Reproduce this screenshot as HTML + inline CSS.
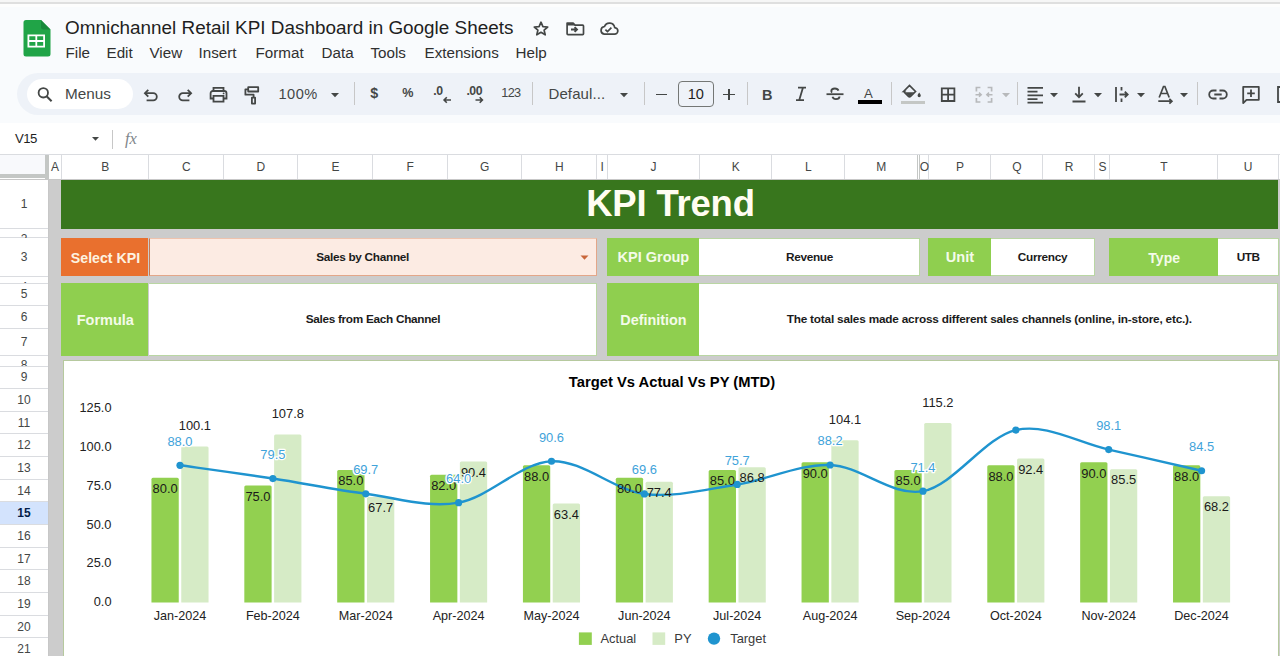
<!DOCTYPE html>
<html><head><meta charset="utf-8"><style>
html,body{margin:0;padding:0;}
body{width:1280px;height:656px;overflow:hidden;position:relative;background:#f9fbfd;font-family:"Liberation Sans", sans-serif;}
body>div,body>svg,div>div{position:absolute;}
.t{white-space:nowrap;}
svg{position:absolute;overflow:visible}
</style></head><body>
<div style="left:0.00px;top:0.00px;width:1280.00px;height:1.80px;background:#f6f6f6;"></div>
<div style="left:0.00px;top:1.80px;width:1280.00px;height:2.00px;background:#dfdfdf;"></div>
<div style="left:0.00px;top:3.80px;width:1280.00px;height:3.20px;background:#fdfdfd;"></div>
<svg style="left:22px;top:19px" width="30" height="38" viewBox="0 0 30 38">
<path d="M3.5 1h15.5l9.5 9.5v24.5a2.5 2.5 0 0 1-2.5 2.5h-22a2.5 2.5 0 0 1-2.5-2.5v-31.5a2.5 2.5 0 0 1 2.5-2.5z" fill="#20a447"/>
<path d="M19 1l9.5 9.5h-7a2.5 2.5 0 0 1-2.5-2.5z" fill="#178a3a"/>
<path d="M5.5 15.5h17.5v13h-17.5z M7.3 17.3v3.8h6.1v-3.8z M15.2 17.3v3.8h6v-3.8z M7.3 22.9v3.8h6.1v-3.8z M15.2 22.9v3.8h6v-3.8z" fill="#fff" fill-rule="evenodd"/>
</svg>
<div class="t" style="left:65.00px;top:18.99px;font-size:18.9px;line-height:18.9px;color:#1f1f1f;">Omnichannel Retail KPI Dashboard in Google Sheets</div>
<svg style="left:531px;top:19px" width="20" height="20" viewBox="0 0 20 20"><path d="M10 3.2l1.9 4.4 4.8.4-3.6 3.1 1.1 4.7-4.2-2.5-4.2 2.5 1.1-4.7-3.6-3.1 4.8-.4z" fill="none" stroke="#444746" stroke-width="1.7" stroke-linejoin="round"/></svg>
<svg style="left:564.3px;top:19px" width="22" height="20" viewBox="0 0 22 20"><path d="M3.1 4.1h6l1.9 2h7.6a.9.9 0 0 1 .9.9v7.7a.9.9 0 0 1-.9.9h-14.6a.9.9 0 0 1-.9-.9z" fill="none" stroke="#444746" stroke-width="1.7" stroke-linejoin="round"/><path d="M3 4h6l1.5 2.5h-7.5z" fill="#444746"/><path d="M7 10.5h5.5M10.6 8.1l2.4 2.4-2.4 2.4" fill="none" stroke="#444746" stroke-width="1.9"/></svg>
<svg style="left:597px;top:19px" width="24" height="20" viewBox="0 0 24 20"><path d="M7.2 15.2h10.2a3.3 3.3 0 0 0 .3-6.6 5.3 5.3 0 0 0-10.2-1.1 3.9 3.9 0 0 0-.3 7.7z" fill="none" stroke="#444746" stroke-width="1.7" stroke-linejoin="round"/><path d="M8.4 10.6l2.1 2 3.9-3.9" fill="none" stroke="#444746" stroke-width="1.7"/></svg>
<div class="t" style="left:65.50px;top:44.63px;font-size:15.2px;line-height:15.2px;color:#303030;">File</div>
<div class="t" style="left:106.50px;top:44.63px;font-size:15.2px;line-height:15.2px;color:#303030;">Edit</div>
<div class="t" style="left:149.50px;top:44.63px;font-size:15.2px;line-height:15.2px;color:#303030;">View</div>
<div class="t" style="left:198.50px;top:44.63px;font-size:15.2px;line-height:15.2px;color:#303030;">Insert</div>
<div class="t" style="left:255.50px;top:44.63px;font-size:15.2px;line-height:15.2px;color:#303030;">Format</div>
<div class="t" style="left:321.50px;top:44.63px;font-size:15.2px;line-height:15.2px;color:#303030;">Data</div>
<div class="t" style="left:370.50px;top:44.63px;font-size:15.2px;line-height:15.2px;color:#303030;">Tools</div>
<div class="t" style="left:424.50px;top:44.63px;font-size:15.2px;line-height:15.2px;color:#303030;">Extensions</div>
<div class="t" style="left:515.50px;top:44.63px;font-size:15.2px;line-height:15.2px;color:#303030;">Help</div>
<div style="left:17px;top:73px;width:1300px;height:41.5px;border-radius:21px;background:#eef2f8"></div>
<div style="left:27px;top:79px;width:106px;height:29.6px;border-radius:15px;background:#ffffff"></div>
<svg style="left:35px;top:85px" width="20" height="20" viewBox="0 0 20 20"><circle cx="8.3" cy="7.8" r="4.7" fill="none" stroke="#444746" stroke-width="1.8"/><path d="M11.6 11.2l5 5" stroke="#444746" stroke-width="2" /></svg>
<div class="t" style="left:65.00px;top:85.64px;font-size:15.3px;line-height:15.3px;color:#444746;">Menus</div>
<svg style="left:140px;top:82px" width="22" height="24" viewBox="0 0 22 24"><path d="M5 11.2h8.2a3.6 3.6 0 0 1 0 7.2h-6.6" fill="none" stroke="#444746" stroke-width="1.8"/><path d="M8.3 7.8l-3.4 3.4 3.4 3.4" fill="none" stroke="#444746" stroke-width="1.8"/></svg>
<svg style="left:174px;top:82px" width="22" height="24" viewBox="0 0 22 24"><path d="M17 11.2h-8.2a3.6 3.6 0 0 0 0 7.2h6.6" fill="none" stroke="#444746" stroke-width="1.8"/><path d="M13.7 7.8l3.4 3.4-3.4 3.4" fill="none" stroke="#444746" stroke-width="1.8"/></svg>
<svg style="left:207px;top:83px" width="24" height="24" viewBox="0 0 24 24"><path d="M6.5 8v-3.2h10v3.2" fill="none" stroke="#444746" stroke-width="1.8"/><path d="M6.2 15.5h-2.6v-5.2a2.3 2.3 0 0 1 2.3-2.3h11.3a2.3 2.3 0 0 1 2.3 2.3v5.2h-2.6" fill="none" stroke="#444746" stroke-width="1.8"/><path d="M6.5 12.8h10v5.9h-10z" fill="none" stroke="#444746" stroke-width="1.8"/><circle cx="16.6" cy="10.4" r="0.9" fill="#444746"/></svg>
<svg style="left:241px;top:82px" width="22" height="24" viewBox="0 0 22 24"><path d="M7.2 5.2h10v4.3h-10z" fill="none" stroke="#444746" stroke-width="1.8" stroke-linejoin="round"/><path d="M7 7.3h-2.6v5.4h8.2v2.5" fill="none" stroke="#444746" stroke-width="1.8" stroke-linejoin="round"/><path d="M10.9 15.6h3.2v6h-3.2z" fill="none" stroke="#444746" stroke-width="1.8" stroke-linejoin="round"/></svg>
<div class="t" style="left:278.50px;top:87.23px;font-size:14.6px;line-height:14.6px;color:#444746;letter-spacing:0.5px;">100%</div>
<svg style="left:330.0px;top:92.10000000000001px" width="10" height="6.2" viewBox="0 0 10 6.2"><path d="M1 1h8l-4.0 4.2z" fill="#444746"/></svg>
<div style="left:354.10px;top:82.00px;width:1.00px;height:23.00px;background:#c7c7c7;"></div>
<div class="t" style="left:370.20px;top:86.49px;font-size:14.3px;line-height:14.3px;color:#444746;font-weight:bold;">$</div>
<div class="t" style="left:402.30px;top:87.23px;font-size:12.6px;line-height:12.6px;color:#444746;font-weight:bold;">%</div>
<div class="t" style="left:433.20px;top:85.28px;font-size:12.3px;line-height:12.3px;color:#444746;font-weight:bold;letter-spacing:-0.3px;">.0</div>
<svg style="left:441px;top:96px" width="12" height="8" viewBox="0 0 12 8"><path d="M10 4h-7M5.8 1.3l-2.7 2.7 2.7 2.7" fill="none" stroke="#444746" stroke-width="1.6"/></svg>
<div class="t" style="left:466.40px;top:85.28px;font-size:12.3px;line-height:12.3px;color:#444746;font-weight:bold;letter-spacing:-0.5px;">.00</div>
<svg style="left:474px;top:96px" width="12" height="8" viewBox="0 0 12 8"><path d="M1.5 4h7M5.7 1.3l2.7 2.7-2.7 2.7" fill="none" stroke="#444746" stroke-width="1.6"/></svg>
<div class="t" style="left:501.20px;top:87.14px;font-size:12.7px;line-height:12.7px;color:#444746;letter-spacing:-0.6px;">123</div>
<div style="left:531.50px;top:82.00px;width:1.00px;height:23.00px;background:#c7c7c7;"></div>
<div class="t" style="left:548.50px;top:85.89px;font-size:15px;line-height:15px;color:#444746;letter-spacing:0.1px;">Defaul...</div>
<svg style="left:618.5px;top:92.4px" width="10" height="6.2" viewBox="0 0 10 6.2"><path d="M1 1h8l-4.0 4.2z" fill="#444746"/></svg>
<div style="left:644.00px;top:82.00px;width:1.00px;height:23.00px;background:#c7c7c7;"></div>
<div style="left:656.00px;top:93.50px;width:11.00px;height:1.80px;background:#444746;"></div>
<div style="left:678px;top:81px;width:33.5px;height:23.5px;border:1px solid #747775;border-radius:4px;"></div>
<div class="t" style="left:295.80px;width:800px;text-align:center;top:87.13px;font-size:14.6px;line-height:14.6px;color:#1f1f1f;">10</div>
<div style="left:723.00px;top:93.50px;width:11.50px;height:1.80px;background:#444746;"></div>
<div style="left:727.90px;top:88.60px;width:1.70px;height:11.60px;background:#444746;"></div>
<div style="left:747.00px;top:82.00px;width:1.00px;height:23.00px;background:#c7c7c7;"></div>
<div class="t" style="left:762.00px;top:87.52px;font-size:14.5px;line-height:14.5px;color:#444746;font-weight:bold;">B</div>
<svg style="left:793px;top:85px" width="16" height="18" viewBox="0 0 16 18"><path d="M5 2.6h8M3 15.2h8M10 2.6l-3.8 12.6" fill="none" stroke="#444746" stroke-width="1.8"/></svg>
<svg style="left:824px;top:84px" width="22" height="20" viewBox="0 0 22 20"><path d="M2.5 10.2h17" fill="none" stroke="#444746" stroke-width="1.8"/><path d="M14.5 6.6c-.5-1.3-1.9-2.1-3.6-2.1-2 0-3.6 1-3.6 2.6 0 .6.3 1.1.7 1.5M8.5 12.8c.4 1.4 1.6 2.3 3.4 2.3 2 0 3.6-1 3.6-2.6" fill="none" stroke="#444746" stroke-width="1.8"/></svg>
<div class="t" style="left:864.00px;top:86.62px;font-size:13.2px;line-height:13.2px;color:#444746;">A</div>
<div style="left:857.50px;top:100.00px;width:24.50px;height:3.80px;background:#000;"></div>
<div style="left:890.50px;top:82.00px;width:1.00px;height:23.00px;background:#c7c7c7;"></div>
<svg style="left:899px;top:83px" width="28" height="22" viewBox="0 0 28 22"><path d="M4.5 8.5l6-6 6 6-5 5a1.4 1.4 0 0 1-2 0l-4-4a.7.7 0 0 1 0-1z" fill="none" stroke="#444746" stroke-width="1.7"/><path d="M5.8 9.3h9.4l-4.2 4.2a.8.8 0 0 1-1.1 0z" fill="#444746"/><path d="M20.2 9.5c1 1.5 1.6 2.4 1.6 3.1a1.6 1.6 0 0 1-3.2 0c0-.7.6-1.6 1.6-3.1z" fill="#444746"/></svg>
<div style="left:900.50px;top:100.60px;width:24.50px;height:3.00px;background:#c4c7c5;"></div>
<svg style="left:938px;top:84px" width="20" height="20" viewBox="0 0 20 20"><path d="M3.8 4.4h12.6v12.6h-12.6zM10.1 4.4v12.6M3.8 10.7h12.6" fill="none" stroke="#444746" stroke-width="1.8"/></svg>
<svg style="left:972px;top:84px" width="24" height="20" viewBox="0 0 24 20"><path d="M4.4 7.5v-4h4M15.6 3.5h4v4M4.4 14v4h4M15.6 18h4v-4" fill="none" stroke="#b7b9bb" stroke-width="1.7"/><path d="M3.5 10.7h5.5M7 8.6l2.2 2.1-2.2 2.1M20.5 10.7h-5.5M17 8.6l-2.2 2.1 2.2 2.1" fill="none" stroke="#b7b9bb" stroke-width="1.5"/></svg>
<svg style="left:1000.7px;top:91.9px" width="10" height="6.2" viewBox="0 0 10 6.2"><path d="M1 1h8l-4.0 4.2z" fill="#b7b9bb"/></svg>
<div style="left:1017.00px;top:82.00px;width:1.00px;height:23.00px;background:#c7c7c7;"></div>
<svg style="left:1025px;top:84px" width="20" height="20" viewBox="0 0 20 20"><path d="M2.5 3.8h15.5M2.5 7.6h10M2.5 11.4h15.5M2.5 15.2h10M2.5 18.6h15.5" fill="none" stroke="#444746" stroke-width="1.7"/></svg>
<svg style="left:1049.3px;top:91.9px" width="10" height="6.2" viewBox="0 0 10 6.2"><path d="M1 1h8l-4.0 4.2z" fill="#444746"/></svg>
<svg style="left:1070px;top:84px" width="18" height="20" viewBox="0 0 18 20"><path d="M9 2.8v10.3M5.2 9.4l3.8 3.8 3.8-3.8M2.5 17.5h13" fill="none" stroke="#444746" stroke-width="1.8"/></svg>
<svg style="left:1092.6px;top:91.9px" width="10" height="6.2" viewBox="0 0 10 6.2"><path d="M1 1h8l-4.0 4.2z" fill="#444746"/></svg>
<svg style="left:1113px;top:84px" width="18" height="20" viewBox="0 0 18 20"><path d="M3 3v15" fill="none" stroke="#444746" stroke-width="1.8"/><path d="M6.5 10.5h8.2M11.8 7.6l2.9 2.9-2.9 2.9" fill="none" stroke="#444746" stroke-width="1.8"/><path d="M8.5 3v3.5M8.5 14.5v3.5" fill="none" stroke="#444746" stroke-width="1.8"/></svg>
<svg style="left:1136.0px;top:91.9px" width="10" height="6.2" viewBox="0 0 10 6.2"><path d="M1 1h8l-4.0 4.2z" fill="#444746"/></svg>
<svg style="left:1156px;top:84px" width="20" height="20" viewBox="0 0 20 20"><path d="M3.2 13.5l4.3-11h1.4l4.3 11M5 9.5h6.3" fill="none" stroke="#444746" stroke-width="1.7"/><path d="M2.3 17.2h13.2M13.4 14.8l2.5 2.4-2.5 2.4" fill="none" stroke="#444746" stroke-width="1.7"/></svg>
<svg style="left:1179.0px;top:91.9px" width="10" height="6.2" viewBox="0 0 10 6.2"><path d="M1 1h8l-4.0 4.2z" fill="#444746"/></svg>
<div style="left:1197.00px;top:82.00px;width:1.00px;height:23.00px;background:#c7c7c7;"></div>
<svg style="left:1207px;top:84px" width="22" height="20" viewBox="0 0 22 20"><path d="M9.5 6.5h-3.3a4 4 0 0 0 0 8h3.3M12.5 6.5h3.3a4 4 0 0 1 0 8h-3.3M7.3 10.5h7.4" fill="none" stroke="#444746" stroke-width="1.8"/></svg>
<svg style="left:1240px;top:84px" width="22" height="22" viewBox="0 0 22 22"><path d="M3.2 2.8h15.6v13h-12.3l-3.3 3.3z" fill="none" stroke="#444746" stroke-width="1.8" stroke-linejoin="round"/><path d="M11 5.6v7.5M7.2 9.4h7.6" fill="none" stroke="#444746" stroke-width="1.8"/></svg>
<svg style="left:1274px;top:84px" width="8" height="20" viewBox="0 0 8 20"><path d="M4 3h6v15h-6z" fill="none" stroke="#444746" stroke-width="1.8"/></svg>
<div style="left:0.00px;top:122.50px;width:1280.00px;height:31.00px;background:#ffffff;"></div>
<div class="t" style="left:15.00px;top:131.82px;font-size:13.2px;line-height:13.2px;color:#1f1f1f;letter-spacing:-0.6px;">V15</div>
<svg style="left:91.0px;top:136.1px" width="9" height="5.8" viewBox="0 0 9 5.8"><path d="M1 1h7l-3.5 3.8z" fill="#444746"/></svg>
<div style="left:112.00px;top:130.00px;width:1.00px;height:18.50px;background:#c7c7c7;"></div>
<div class="t" style="left:125.00px;top:131.02px;font-size:16.5px;line-height:16.5px;color:#80868b;font-family:'Liberation Serif',serif;"><i>fx</i></div>
<div style="left:0.00px;top:153.50px;width:1280.00px;height:1.20px;background:#dadce0;"></div>
<div style="left:0.00px;top:154.70px;width:1280.00px;height:24.70px;background:#ffffff;"></div>
<div style="left:0.00px;top:179.40px;width:1280.00px;height:0.80px;background:#c7c7c7;"></div>
<div style="left:0.00px;top:154.70px;width:44.50px;height:19.80px;background:#f8f9fc;"></div>
<div style="left:44.50px;top:154.70px;width:4.00px;height:24.70px;background:#c4c7c5;"></div>
<div style="left:0.00px;top:174.40px;width:48.50px;height:3.80px;background:#c4c7c5;"></div>
<div style="left:60.80px;top:154.70px;width:1.00px;height:24.70px;background:#dadce0;"></div>
<div class="t" style="left:-344.95px;width:800px;text-align:center;top:160.84px;font-size:12px;line-height:12px;color:#444746;">A</div>
<div style="left:148.00px;top:154.70px;width:1.00px;height:24.70px;background:#dadce0;"></div>
<div class="t" style="left:-294.70px;width:800px;text-align:center;top:160.84px;font-size:12px;line-height:12px;color:#444746;">B</div>
<div style="left:222.80px;top:154.70px;width:1.00px;height:24.70px;background:#dadce0;"></div>
<div class="t" style="left:-213.70px;width:800px;text-align:center;top:160.84px;font-size:12px;line-height:12px;color:#444746;">C</div>
<div style="left:297.20px;top:154.70px;width:1.00px;height:24.70px;background:#dadce0;"></div>
<div class="t" style="left:-139.10px;width:800px;text-align:center;top:160.84px;font-size:12px;line-height:12px;color:#444746;">D</div>
<div style="left:372.00px;top:154.70px;width:1.00px;height:24.70px;background:#dadce0;"></div>
<div class="t" style="left:-64.50px;width:800px;text-align:center;top:160.84px;font-size:12px;line-height:12px;color:#444746;">E</div>
<div style="left:446.50px;top:154.70px;width:1.00px;height:24.70px;background:#dadce0;"></div>
<div class="t" style="left:10.15px;width:800px;text-align:center;top:160.84px;font-size:12px;line-height:12px;color:#444746;">F</div>
<div style="left:521.00px;top:154.70px;width:1.00px;height:24.70px;background:#dadce0;"></div>
<div class="t" style="left:84.65px;width:800px;text-align:center;top:160.84px;font-size:12px;line-height:12px;color:#444746;">G</div>
<div style="left:595.90px;top:154.70px;width:1.00px;height:24.70px;background:#dadce0;"></div>
<div class="t" style="left:159.35px;width:800px;text-align:center;top:160.84px;font-size:12px;line-height:12px;color:#444746;">H</div>
<div style="left:606.80px;top:154.70px;width:1.00px;height:24.70px;background:#dadce0;"></div>
<div class="t" style="left:202.25px;width:800px;text-align:center;top:160.84px;font-size:12px;line-height:12px;color:#444746;">I</div>
<div style="left:698.50px;top:154.70px;width:1.00px;height:24.70px;background:#dadce0;"></div>
<div class="t" style="left:253.55px;width:800px;text-align:center;top:160.84px;font-size:12px;line-height:12px;color:#444746;">J</div>
<div style="left:771.00px;top:154.70px;width:1.00px;height:24.70px;background:#dadce0;"></div>
<div class="t" style="left:335.65px;width:800px;text-align:center;top:160.84px;font-size:12px;line-height:12px;color:#444746;">K</div>
<div style="left:844.00px;top:154.70px;width:1.00px;height:24.70px;background:#dadce0;"></div>
<div class="t" style="left:408.40px;width:800px;text-align:center;top:160.84px;font-size:12px;line-height:12px;color:#444746;">L</div>
<div style="left:916.50px;top:154.70px;width:1.00px;height:24.70px;background:#dadce0;"></div>
<div class="t" style="left:481.15px;width:800px;text-align:center;top:160.84px;font-size:12px;line-height:12px;color:#444746;">M</div>
<div style="left:927.90px;top:154.70px;width:1.00px;height:24.70px;background:#dadce0;"></div>
<div class="t" style="left:524.50px;width:800px;text-align:center;top:160.84px;font-size:12px;line-height:12px;color:#444746;">O</div>
<div style="left:990.10px;top:154.70px;width:1.00px;height:24.70px;background:#dadce0;"></div>
<div class="t" style="left:559.90px;width:800px;text-align:center;top:160.84px;font-size:12px;line-height:12px;color:#444746;">P</div>
<div style="left:1042.10px;top:154.70px;width:1.00px;height:24.70px;background:#dadce0;"></div>
<div class="t" style="left:617.00px;width:800px;text-align:center;top:160.84px;font-size:12px;line-height:12px;color:#444746;">Q</div>
<div style="left:1094.20px;top:154.70px;width:1.00px;height:24.70px;background:#dadce0;"></div>
<div class="t" style="left:669.05px;width:800px;text-align:center;top:160.84px;font-size:12px;line-height:12px;color:#444746;">R</div>
<div style="left:1109.20px;top:154.70px;width:1.00px;height:24.70px;background:#dadce0;"></div>
<div class="t" style="left:702.60px;width:800px;text-align:center;top:160.84px;font-size:12px;line-height:12px;color:#444746;">S</div>
<div style="left:1217.00px;top:154.70px;width:1.00px;height:24.70px;background:#dadce0;"></div>
<div class="t" style="left:764.00px;width:800px;text-align:center;top:160.84px;font-size:12px;line-height:12px;color:#444746;">T</div>
<div style="left:1277.50px;top:154.70px;width:1.00px;height:24.70px;background:#dadce0;"></div>
<div class="t" style="left:848.15px;width:800px;text-align:center;top:160.84px;font-size:12px;line-height:12px;color:#444746;">U</div>
<div style="left:1399.50px;top:154.70px;width:1.00px;height:24.70px;background:#dadce0;"></div>
<div style="left:916.50px;top:154.70px;width:1.00px;height:24.70px;background:#c4c7c5;"></div>
<div style="left:919.30px;top:154.70px;width:1.00px;height:24.70px;background:#c4c7c5;"></div>
<div style="left:48.00px;top:180.00px;width:1232.00px;height:476.00px;background:#cccccc;"></div>
<div style="left:0.00px;top:180.00px;width:48.00px;height:476.00px;background:#ffffff;"></div>
<div style="left:0;top:180px;width:48px;height:476px;overflow:hidden">
<div style="left:0.00px;top:48.30px;width:48.00px;height:1.00px;background:#dadce0;"></div>
<div style="left:0;top:-0.60px;width:48px;height:49.40px;overflow:hidden">
<div class="t" style="left:-376.00px;width:800px;text-align:center;top:18.84px;font-size:12px;line-height:12px;color:#444746;">1</div>
</div>
<div style="left:0.00px;top:57.30px;width:48.00px;height:1.00px;background:#dadce0;"></div>
<div style="left:0;top:48.80px;width:48px;height:9.00px;overflow:hidden">
<div class="t" style="left:-376.00px;width:800px;text-align:center;top:4.14px;font-size:12px;line-height:12px;color:#444746;">2</div>
</div>
<div style="left:0.00px;top:96.10px;width:48.00px;height:1.00px;background:#dadce0;"></div>
<div style="left:0;top:57.80px;width:48px;height:38.80px;overflow:hidden">
<div class="t" style="left:-376.00px;width:800px;text-align:center;top:13.54px;font-size:12px;line-height:12px;color:#444746;">3</div>
</div>
<div style="left:0.00px;top:102.50px;width:48.00px;height:1.00px;background:#dadce0;"></div>
<div style="left:0;top:96.60px;width:48px;height:6.40px;overflow:hidden">
<div class="t" style="left:-376.00px;width:800px;text-align:center;top:4.14px;font-size:12px;line-height:12px;color:#444746;">4</div>
</div>
<div style="left:0.00px;top:125.10px;width:48.00px;height:1.00px;background:#dadce0;"></div>
<div style="left:0;top:103.00px;width:48px;height:22.60px;overflow:hidden">
<div class="t" style="left:-376.00px;width:800px;text-align:center;top:5.44px;font-size:12px;line-height:12px;color:#444746;">5</div>
</div>
<div style="left:0.00px;top:148.00px;width:48.00px;height:1.00px;background:#dadce0;"></div>
<div style="left:0;top:125.60px;width:48px;height:22.90px;overflow:hidden">
<div class="t" style="left:-376.00px;width:800px;text-align:center;top:5.59px;font-size:12px;line-height:12px;color:#444746;">6</div>
</div>
<div style="left:0.00px;top:174.80px;width:48.00px;height:1.00px;background:#dadce0;"></div>
<div style="left:0;top:148.50px;width:48px;height:26.80px;overflow:hidden">
<div class="t" style="left:-376.00px;width:800px;text-align:center;top:7.54px;font-size:12px;line-height:12px;color:#444746;">7</div>
</div>
<div style="left:0.00px;top:185.50px;width:48.00px;height:1.00px;background:#dadce0;"></div>
<div style="left:0;top:175.30px;width:48px;height:10.70px;overflow:hidden">
<div class="t" style="left:-376.00px;width:800px;text-align:center;top:4.14px;font-size:12px;line-height:12px;color:#444746;">8</div>
</div>
<div style="left:0.00px;top:208.15px;width:48.00px;height:1.00px;background:#dadce0;"></div>
<div style="left:0;top:186.00px;width:48px;height:22.65px;overflow:hidden">
<div class="t" style="left:-376.00px;width:800px;text-align:center;top:5.46px;font-size:12px;line-height:12px;color:#444746;">9</div>
</div>
<div style="left:0.00px;top:230.80px;width:48.00px;height:1.00px;background:#dadce0;"></div>
<div style="left:0;top:208.65px;width:48px;height:22.65px;overflow:hidden">
<div class="t" style="left:-376.00px;width:800px;text-align:center;top:5.46px;font-size:12px;line-height:12px;color:#444746;">10</div>
</div>
<div style="left:0.00px;top:253.45px;width:48.00px;height:1.00px;background:#dadce0;"></div>
<div style="left:0;top:231.30px;width:48px;height:22.65px;overflow:hidden">
<div class="t" style="left:-376.00px;width:800px;text-align:center;top:5.46px;font-size:12px;line-height:12px;color:#444746;">11</div>
</div>
<div style="left:0.00px;top:276.10px;width:48.00px;height:1.00px;background:#dadce0;"></div>
<div style="left:0;top:253.95px;width:48px;height:22.65px;overflow:hidden">
<div class="t" style="left:-376.00px;width:800px;text-align:center;top:5.46px;font-size:12px;line-height:12px;color:#444746;">12</div>
</div>
<div style="left:0.00px;top:298.75px;width:48.00px;height:1.00px;background:#dadce0;"></div>
<div style="left:0;top:276.60px;width:48px;height:22.65px;overflow:hidden">
<div class="t" style="left:-376.00px;width:800px;text-align:center;top:5.46px;font-size:12px;line-height:12px;color:#444746;">13</div>
</div>
<div style="left:0.00px;top:321.40px;width:48.00px;height:1.00px;background:#dadce0;"></div>
<div style="left:0;top:299.25px;width:48px;height:22.65px;overflow:hidden">
<div class="t" style="left:-376.00px;width:800px;text-align:center;top:5.46px;font-size:12px;line-height:12px;color:#444746;">14</div>
</div>
<div style="left:0.00px;top:321.90px;width:48.00px;height:22.65px;background:#d3e3fd;"></div>
<div style="left:0.00px;top:344.05px;width:48.00px;height:1.00px;background:#dadce0;"></div>
<div style="left:0;top:321.90px;width:48px;height:22.65px;overflow:hidden">
<div class="t" style="left:-376.00px;width:800px;text-align:center;top:5.46px;font-size:12px;line-height:12px;color:#041e49;font-weight:bold;">15</div>
</div>
<div style="left:0.00px;top:366.70px;width:48.00px;height:1.00px;background:#dadce0;"></div>
<div style="left:0;top:344.55px;width:48px;height:22.65px;overflow:hidden">
<div class="t" style="left:-376.00px;width:800px;text-align:center;top:5.46px;font-size:12px;line-height:12px;color:#444746;">16</div>
</div>
<div style="left:0.00px;top:389.35px;width:48.00px;height:1.00px;background:#dadce0;"></div>
<div style="left:0;top:367.20px;width:48px;height:22.65px;overflow:hidden">
<div class="t" style="left:-376.00px;width:800px;text-align:center;top:5.46px;font-size:12px;line-height:12px;color:#444746;">17</div>
</div>
<div style="left:0.00px;top:412.00px;width:48.00px;height:1.00px;background:#dadce0;"></div>
<div style="left:0;top:389.85px;width:48px;height:22.65px;overflow:hidden">
<div class="t" style="left:-376.00px;width:800px;text-align:center;top:5.46px;font-size:12px;line-height:12px;color:#444746;">18</div>
</div>
<div style="left:0.00px;top:434.65px;width:48.00px;height:1.00px;background:#dadce0;"></div>
<div style="left:0;top:412.50px;width:48px;height:22.65px;overflow:hidden">
<div class="t" style="left:-376.00px;width:800px;text-align:center;top:5.46px;font-size:12px;line-height:12px;color:#444746;">19</div>
</div>
<div style="left:0.00px;top:457.30px;width:48.00px;height:1.00px;background:#dadce0;"></div>
<div style="left:0;top:435.15px;width:48px;height:22.65px;overflow:hidden">
<div class="t" style="left:-376.00px;width:800px;text-align:center;top:5.46px;font-size:12px;line-height:12px;color:#444746;">20</div>
</div>
<div style="left:0.00px;top:479.95px;width:48.00px;height:1.00px;background:#dadce0;"></div>
<div style="left:0;top:457.80px;width:48px;height:22.65px;overflow:hidden">
<div class="t" style="left:-376.00px;width:800px;text-align:center;top:5.46px;font-size:12px;line-height:12px;color:#444746;">21</div>
</div>
<div style="left:0.00px;top:502.60px;width:48.00px;height:1.00px;background:#dadce0;"></div>
<div style="left:0;top:480.45px;width:48px;height:22.65px;overflow:hidden">
<div class="t" style="left:-376.00px;width:800px;text-align:center;top:5.46px;font-size:12px;line-height:12px;color:#444746;">22</div>
</div>
</div>
<div style="left:47.50px;top:180.00px;width:1.00px;height:476.00px;background:#c7c7c7;"></div>
<div style="left:61.30px;top:180.00px;width:1216.70px;height:48.60px;background:#38761d;"></div>
<div class="t" style="left:270.50px;width:800px;text-align:center;top:185.98px;font-size:36.5px;line-height:36.5px;color:#fffdf2;font-weight:bold;letter-spacing:-0.2px;">KPI Trend</div>
<div style="left:61.30px;top:237.60px;width:87.20px;height:38.80px;background:#e9702e;"></div>
<div style="left:148.50px;top:237.60px;width:448.10px;height:38.80px;background:#fcebe3;box-sizing:border-box;border:1px solid #e3a689;border-top-color:#eec3ae;border-left-color:#c9784f;"></div>
<div class="t" style="left:-294.50px;width:800px;text-align:center;top:250.77px;font-size:14.2px;line-height:14.2px;color:#fdf3e0;font-weight:bold;">Select KPI</div>
<div class="t" style="left:-37.40px;width:800px;text-align:center;top:251.51px;font-size:11.8px;line-height:11.8px;color:#1b1b1b;font-weight:bold;letter-spacing:-0.3px;">Sales by Channel</div>
<svg style="left:579px;top:253.5px" width="11" height="7" viewBox="0 0 11 7"><path d="M1.5 1.5h8l-4 4.2z" fill="#c8663a"/></svg>
<div style="left:606.80px;top:237.60px;width:92.20px;height:38.80px;background:#8fcf4f;"></div>
<div style="left:699.00px;top:237.60px;width:220.60px;height:38.80px;background:#ffffff;box-sizing:border-box;border:1px solid #b9d6a3;border-left:none;"></div>
<div class="t" style="left:253.40px;width:800px;text-align:center;top:250.42px;font-size:14.5px;line-height:14.5px;color:#f4fbe9;font-weight:bold;">KPI Group</div>
<div class="t" style="left:409.50px;width:800px;text-align:center;top:251.51px;font-size:11.8px;line-height:11.8px;color:#1b1b1b;font-weight:bold;letter-spacing:-0.3px;">Revenue</div>
<div style="left:927.90px;top:237.60px;width:63.10px;height:38.80px;background:#8fcf4f;"></div>
<div style="left:991.00px;top:237.60px;width:103.50px;height:38.80px;background:#ffffff;box-sizing:border-box;border:1px solid #b9d6a3;border-left:none;"></div>
<div class="t" style="left:560.00px;width:800px;text-align:center;top:250.33px;font-size:14.6px;line-height:14.6px;color:#f4fbe9;font-weight:bold;">Unit</div>
<div class="t" style="left:642.50px;width:800px;text-align:center;top:251.51px;font-size:11.8px;line-height:11.8px;color:#1b1b1b;font-weight:bold;letter-spacing:-0.3px;">Currency</div>
<div style="left:1109.00px;top:237.60px;width:108.50px;height:38.80px;background:#8fcf4f;"></div>
<div style="left:1217.50px;top:237.60px;width:61.00px;height:38.80px;background:#ffffff;box-sizing:border-box;border:1px solid #b9d6a3;border-left:none;"></div>
<div class="t" style="left:764.20px;width:800px;text-align:center;top:250.84px;font-size:14px;line-height:14px;color:#f4fbe9;font-weight:bold;">Type</div>
<div class="t" style="left:848.20px;width:800px;text-align:center;top:251.51px;font-size:11.8px;line-height:11.8px;color:#1b1b1b;font-weight:bold;letter-spacing:-0.5px;">UTB</div>
<div style="left:61.30px;top:283.00px;width:87.20px;height:72.50px;background:#8fcf4f;"></div>
<div style="left:148.50px;top:283.00px;width:448.10px;height:72.50px;background:#ffffff;box-sizing:border-box;border:1px solid #b9d6a3;border-left:none;"></div>
<div class="t" style="left:-294.70px;width:800px;text-align:center;top:312.72px;font-size:14.5px;line-height:14.5px;color:#f4fbe9;font-weight:bold;">Formula</div>
<div class="t" style="left:-27.00px;width:800px;text-align:center;top:313.51px;font-size:11.8px;line-height:11.8px;color:#1b1b1b;font-weight:bold;letter-spacing:-0.3px;">Sales from Each Channel</div>
<div style="left:606.80px;top:283.00px;width:92.60px;height:72.50px;background:#8fcf4f;"></div>
<div style="left:699.40px;top:283.00px;width:579.10px;height:72.50px;background:#ffffff;box-sizing:border-box;border:1px solid #b9d6a3;border-left:none;"></div>
<div class="t" style="left:253.50px;width:800px;text-align:center;top:312.80px;font-size:14.4px;line-height:14.4px;color:#f4fbe9;font-weight:bold;">Definition</div>
<div class="t" style="left:589.30px;width:800px;text-align:center;top:313.51px;font-size:11.8px;line-height:11.8px;color:#1b1b1b;font-weight:bold;letter-spacing:-0.2px;">The total sales made across different sales channels (online, in-store, etc.).</div>
<div style="left:62.5px;top:360.3px;width:1216.5px;height:400px;background:#fff;box-sizing:border-box;border:1px solid #b6c99e;"></div>
<svg style="left:0;top:0" width="1280" height="656" viewBox="0 0 1280 656" font-family="Liberation Sans, sans-serif">
<text x="672.00" y="387.00" font-size="14.75" fill="#000" text-anchor="middle" font-weight="bold">Target Vs Actual Vs PY (MTD)</text>
<text x="111.50" y="606.40" font-size="12.8" fill="#222" text-anchor="end" font-weight="normal">0.0</text>
<text x="111.50" y="567.45" font-size="12.8" fill="#222" text-anchor="end" font-weight="normal">25.0</text>
<text x="111.50" y="528.50" font-size="12.8" fill="#222" text-anchor="end" font-weight="normal">50.0</text>
<text x="111.50" y="489.55" font-size="12.8" fill="#222" text-anchor="end" font-weight="normal">75.0</text>
<text x="111.50" y="450.60" font-size="12.8" fill="#222" text-anchor="end" font-weight="normal">100.0</text>
<text x="111.50" y="411.65" font-size="12.8" fill="#222" text-anchor="end" font-weight="normal">125.0</text>
<path d="M151.45 602.40V479.26Q151.45 477.76 152.95 477.76H177.25Q178.75 477.76 178.75 479.26V602.40z" fill="#92d050"/>
<path d="M181.25 602.40V447.94Q181.25 446.44 182.75 446.44H207.05Q208.55 446.44 208.55 447.94V602.40z" fill="#d6ebc6"/>
<text x="180.00" y="619.80" font-size="12.6" fill="#222" text-anchor="middle" font-weight="normal">Jan-2024</text>
<path d="M244.32 602.40V487.05Q244.32 485.55 245.82 485.55H270.12Q271.62 485.55 271.62 487.05V602.40z" fill="#92d050"/>
<path d="M274.12 602.40V435.95Q274.12 434.45 275.62 434.45H299.92Q301.42 434.45 301.42 435.95V602.40z" fill="#d6ebc6"/>
<text x="272.87" y="619.80" font-size="12.6" fill="#222" text-anchor="middle" font-weight="normal">Feb-2024</text>
<path d="M337.19 602.40V471.47Q337.19 469.97 338.69 469.97H362.99Q364.49 469.97 364.49 471.47V602.40z" fill="#92d050"/>
<path d="M366.99 602.40V498.42Q366.99 496.92 368.49 496.92H392.79Q394.29 496.92 394.29 498.42V602.40z" fill="#d6ebc6"/>
<text x="365.74" y="619.80" font-size="12.6" fill="#222" text-anchor="middle" font-weight="normal">Mar-2024</text>
<path d="M430.06 602.40V476.14Q430.06 474.64 431.56 474.64H455.86Q457.36 474.64 457.36 476.14V602.40z" fill="#92d050"/>
<path d="M459.86 602.40V463.06Q459.86 461.56 461.36 461.56H485.66Q487.16 461.56 487.16 463.06V602.40z" fill="#d6ebc6"/>
<text x="458.61" y="619.80" font-size="12.6" fill="#222" text-anchor="middle" font-weight="normal">Apr-2024</text>
<path d="M522.93 602.40V466.80Q522.93 465.30 524.43 465.30H548.73Q550.23 465.30 550.23 466.80V602.40z" fill="#92d050"/>
<path d="M552.73 602.40V505.12Q552.73 503.62 554.23 503.62H578.53Q580.03 503.62 580.03 505.12V602.40z" fill="#d6ebc6"/>
<text x="551.48" y="619.80" font-size="12.6" fill="#222" text-anchor="middle" font-weight="normal">May-2024</text>
<path d="M615.80 602.40V479.26Q615.80 477.76 617.30 477.76H641.60Q643.10 477.76 643.10 479.26V602.40z" fill="#92d050"/>
<path d="M645.60 602.40V483.31Q645.60 481.81 647.10 481.81H671.40Q672.90 481.81 672.90 483.31V602.40z" fill="#d6ebc6"/>
<text x="644.35" y="619.80" font-size="12.6" fill="#222" text-anchor="middle" font-weight="normal">Jun-2024</text>
<path d="M708.67 602.40V471.47Q708.67 469.97 710.17 469.97H734.47Q735.97 469.97 735.97 471.47V602.40z" fill="#92d050"/>
<path d="M738.47 602.40V468.67Q738.47 467.17 739.97 467.17H764.27Q765.77 467.17 765.77 468.67V602.40z" fill="#d6ebc6"/>
<text x="737.22" y="619.80" font-size="12.6" fill="#222" text-anchor="middle" font-weight="normal">Jul-2024</text>
<path d="M801.54 602.40V463.68Q801.54 462.18 803.04 462.18H827.34Q828.84 462.18 828.84 463.68V602.40z" fill="#92d050"/>
<path d="M831.34 602.40V441.71Q831.34 440.21 832.84 440.21H857.14Q858.64 440.21 858.64 441.71V602.40z" fill="#d6ebc6"/>
<text x="830.09" y="619.80" font-size="12.6" fill="#222" text-anchor="middle" font-weight="normal">Aug-2024</text>
<path d="M894.41 602.40V471.47Q894.41 469.97 895.91 469.97H920.21Q921.71 469.97 921.71 471.47V602.40z" fill="#92d050"/>
<path d="M924.21 602.40V424.42Q924.21 422.92 925.71 422.92H950.01Q951.51 422.92 951.51 424.42V602.40z" fill="#d6ebc6"/>
<text x="922.96" y="619.80" font-size="12.6" fill="#222" text-anchor="middle" font-weight="normal">Sep-2024</text>
<path d="M987.28 602.40V466.80Q987.28 465.30 988.78 465.30H1013.08Q1014.58 465.30 1014.58 466.80V602.40z" fill="#92d050"/>
<path d="M1017.08 602.40V459.94Q1017.08 458.44 1018.58 458.44H1042.88Q1044.38 458.44 1044.38 459.94V602.40z" fill="#d6ebc6"/>
<text x="1015.83" y="619.80" font-size="12.6" fill="#222" text-anchor="middle" font-weight="normal">Oct-2024</text>
<path d="M1080.15 602.40V463.68Q1080.15 462.18 1081.65 462.18H1105.95Q1107.45 462.18 1107.45 463.68V602.40z" fill="#92d050"/>
<path d="M1109.95 602.40V470.69Q1109.95 469.19 1111.45 469.19H1135.75Q1137.25 469.19 1137.25 470.69V602.40z" fill="#d6ebc6"/>
<text x="1108.70" y="619.80" font-size="12.6" fill="#222" text-anchor="middle" font-weight="normal">Nov-2024</text>
<path d="M1173.02 602.40V466.80Q1173.02 465.30 1174.52 465.30H1198.82Q1200.32 465.30 1200.32 466.80V602.40z" fill="#92d050"/>
<path d="M1202.82 602.40V497.64Q1202.82 496.14 1204.32 496.14H1228.62Q1230.12 496.14 1230.12 497.64V602.40z" fill="#d6ebc6"/>
<text x="1201.57" y="619.80" font-size="12.6" fill="#222" text-anchor="middle" font-weight="normal">Dec-2024</text>
<path d="M180.00 465.30C195.48 467.50 241.91 473.79 272.87 478.54C303.83 483.29 334.78 489.78 365.74 493.81C396.70 497.83 427.65 508.12 458.61 502.69C489.57 497.26 520.52 462.70 551.48 461.25C582.44 459.79 613.39 490.09 644.35 493.96C675.31 497.83 706.26 489.29 737.22 484.46C768.18 479.63 799.13 463.87 830.09 464.98C861.05 466.10 892.00 496.98 922.96 491.16C953.92 485.34 984.87 437.02 1015.83 430.09C1046.79 423.15 1077.74 442.78 1108.70 449.56C1139.66 456.34 1186.09 467.22 1201.57 470.75" fill="none" stroke="#1f94cf" stroke-width="2.4"/>
<circle cx="180.00" cy="465.30" r="3.6" fill="#1f94cf"/>
<circle cx="272.87" cy="478.54" r="3.6" fill="#1f94cf"/>
<circle cx="365.74" cy="493.81" r="3.6" fill="#1f94cf"/>
<circle cx="458.61" cy="502.69" r="3.6" fill="#1f94cf"/>
<circle cx="551.48" cy="461.25" r="3.6" fill="#1f94cf"/>
<circle cx="644.35" cy="493.96" r="3.6" fill="#1f94cf"/>
<circle cx="737.22" cy="484.46" r="3.6" fill="#1f94cf"/>
<circle cx="830.09" cy="464.98" r="3.6" fill="#1f94cf"/>
<circle cx="922.96" cy="491.16" r="3.6" fill="#1f94cf"/>
<circle cx="1015.83" cy="430.09" r="3.6" fill="#1f94cf"/>
<circle cx="1108.70" cy="449.56" r="3.6" fill="#1f94cf"/>
<circle cx="1201.57" cy="470.75" r="3.6" fill="#1f94cf"/>
<text x="165.10" y="493.26" font-size="12.9" fill="#1a1a1a" text-anchor="middle" font-weight="normal">80.0</text>
<text x="194.90" y="430.44" font-size="12.9" fill="#222" text-anchor="middle" font-weight="normal">100.1</text>
<text x="257.97" y="501.05" font-size="12.9" fill="#1a1a1a" text-anchor="middle" font-weight="normal">75.0</text>
<text x="287.77" y="418.45" font-size="12.9" fill="#222" text-anchor="middle" font-weight="normal">107.8</text>
<text x="350.84" y="485.47" font-size="12.9" fill="#1a1a1a" text-anchor="middle" font-weight="normal">85.0</text>
<text x="380.64" y="512.22" font-size="12.9" fill="#1a1a1a" text-anchor="middle" font-weight="normal">67.7</text>
<text x="443.71" y="490.14" font-size="12.9" fill="#1a1a1a" text-anchor="middle" font-weight="normal">82.0</text>
<text x="473.51" y="476.86" font-size="12.9" fill="#1a1a1a" text-anchor="middle" font-weight="normal">90.4</text>
<text x="536.58" y="480.80" font-size="12.9" fill="#1a1a1a" text-anchor="middle" font-weight="normal">88.0</text>
<text x="566.38" y="518.92" font-size="12.9" fill="#1a1a1a" text-anchor="middle" font-weight="normal">63.4</text>
<text x="629.45" y="493.26" font-size="12.9" fill="#1a1a1a" text-anchor="middle" font-weight="normal">80.0</text>
<text x="659.25" y="497.11" font-size="12.9" fill="#1a1a1a" text-anchor="middle" font-weight="normal">77.4</text>
<text x="722.32" y="485.47" font-size="12.9" fill="#1a1a1a" text-anchor="middle" font-weight="normal">85.0</text>
<text x="752.12" y="482.47" font-size="12.9" fill="#1a1a1a" text-anchor="middle" font-weight="normal">86.8</text>
<text x="815.19" y="477.68" font-size="12.9" fill="#1a1a1a" text-anchor="middle" font-weight="normal">90.0</text>
<text x="844.99" y="424.21" font-size="12.9" fill="#222" text-anchor="middle" font-weight="normal">104.1</text>
<text x="908.06" y="485.47" font-size="12.9" fill="#1a1a1a" text-anchor="middle" font-weight="normal">85.0</text>
<text x="937.86" y="406.92" font-size="12.9" fill="#222" text-anchor="middle" font-weight="normal">115.2</text>
<text x="1000.93" y="480.80" font-size="12.9" fill="#1a1a1a" text-anchor="middle" font-weight="normal">88.0</text>
<text x="1030.73" y="473.74" font-size="12.9" fill="#1a1a1a" text-anchor="middle" font-weight="normal">92.4</text>
<text x="1093.80" y="477.68" font-size="12.9" fill="#1a1a1a" text-anchor="middle" font-weight="normal">90.0</text>
<text x="1123.60" y="484.49" font-size="12.9" fill="#1a1a1a" text-anchor="middle" font-weight="normal">85.5</text>
<text x="1186.67" y="480.80" font-size="12.9" fill="#1a1a1a" text-anchor="middle" font-weight="normal">88.0</text>
<text x="1216.47" y="511.44" font-size="12.9" fill="#1a1a1a" text-anchor="middle" font-weight="normal">68.2</text>
<text x="180.00" y="445.80" font-size="12.9" fill="#3fa3da" text-anchor="middle" font-weight="normal" stroke="#fff" stroke-width="2.5" paint-order="stroke" stroke-linejoin="round">88.0</text>
<text x="272.87" y="459.04" font-size="12.9" fill="#3fa3da" text-anchor="middle" font-weight="normal" stroke="#fff" stroke-width="2.5" paint-order="stroke" stroke-linejoin="round">79.5</text>
<text x="365.74" y="474.31" font-size="12.9" fill="#3fa3da" text-anchor="middle" font-weight="normal" stroke="#fff" stroke-width="2.5" paint-order="stroke" stroke-linejoin="round">69.7</text>
<text x="458.61" y="483.19" font-size="12.9" fill="#3fa3da" text-anchor="middle" font-weight="normal" stroke="#fff" stroke-width="2.5" paint-order="stroke" stroke-linejoin="round">64.0</text>
<text x="551.48" y="441.75" font-size="12.9" fill="#3fa3da" text-anchor="middle" font-weight="normal" stroke="#fff" stroke-width="2.5" paint-order="stroke" stroke-linejoin="round">90.6</text>
<text x="644.35" y="474.46" font-size="12.9" fill="#3fa3da" text-anchor="middle" font-weight="normal" stroke="#fff" stroke-width="2.5" paint-order="stroke" stroke-linejoin="round">69.6</text>
<text x="737.22" y="464.96" font-size="12.9" fill="#3fa3da" text-anchor="middle" font-weight="normal" stroke="#fff" stroke-width="2.5" paint-order="stroke" stroke-linejoin="round">75.7</text>
<text x="830.09" y="445.48" font-size="12.9" fill="#3fa3da" text-anchor="middle" font-weight="normal" stroke="#fff" stroke-width="2.5" paint-order="stroke" stroke-linejoin="round">88.2</text>
<text x="922.96" y="471.66" font-size="12.9" fill="#3fa3da" text-anchor="middle" font-weight="normal" stroke="#fff" stroke-width="2.5" paint-order="stroke" stroke-linejoin="round">71.4</text>
<text x="1108.70" y="430.06" font-size="12.9" fill="#3fa3da" text-anchor="middle" font-weight="normal" stroke="#fff" stroke-width="2.5" paint-order="stroke" stroke-linejoin="round">98.1</text>
<text x="1201.57" y="451.25" font-size="12.9" fill="#3fa3da" text-anchor="middle" font-weight="normal" stroke="#fff" stroke-width="2.5" paint-order="stroke" stroke-linejoin="round">84.5</text>
<rect x="578.9" y="632.4" width="12.9" height="12.5" fill="#92d050"/>
<text x="600.40" y="642.70" font-size="12.9" fill="#3a3a3a" text-anchor="start" font-weight="normal">Actual</text>
<rect x="652.5" y="632.4" width="12.7" height="12.5" fill="#d6ebc6"/>
<text x="674.30" y="642.70" font-size="12.9" fill="#3a3a3a" text-anchor="start" font-weight="normal">PY</text>
<circle cx="714" cy="638.6" r="6.2" fill="#1f94cf"/>
<text x="730.20" y="642.70" font-size="12.9" fill="#3a3a3a" text-anchor="start" font-weight="normal">Target</text>
</svg>
</body></html>
